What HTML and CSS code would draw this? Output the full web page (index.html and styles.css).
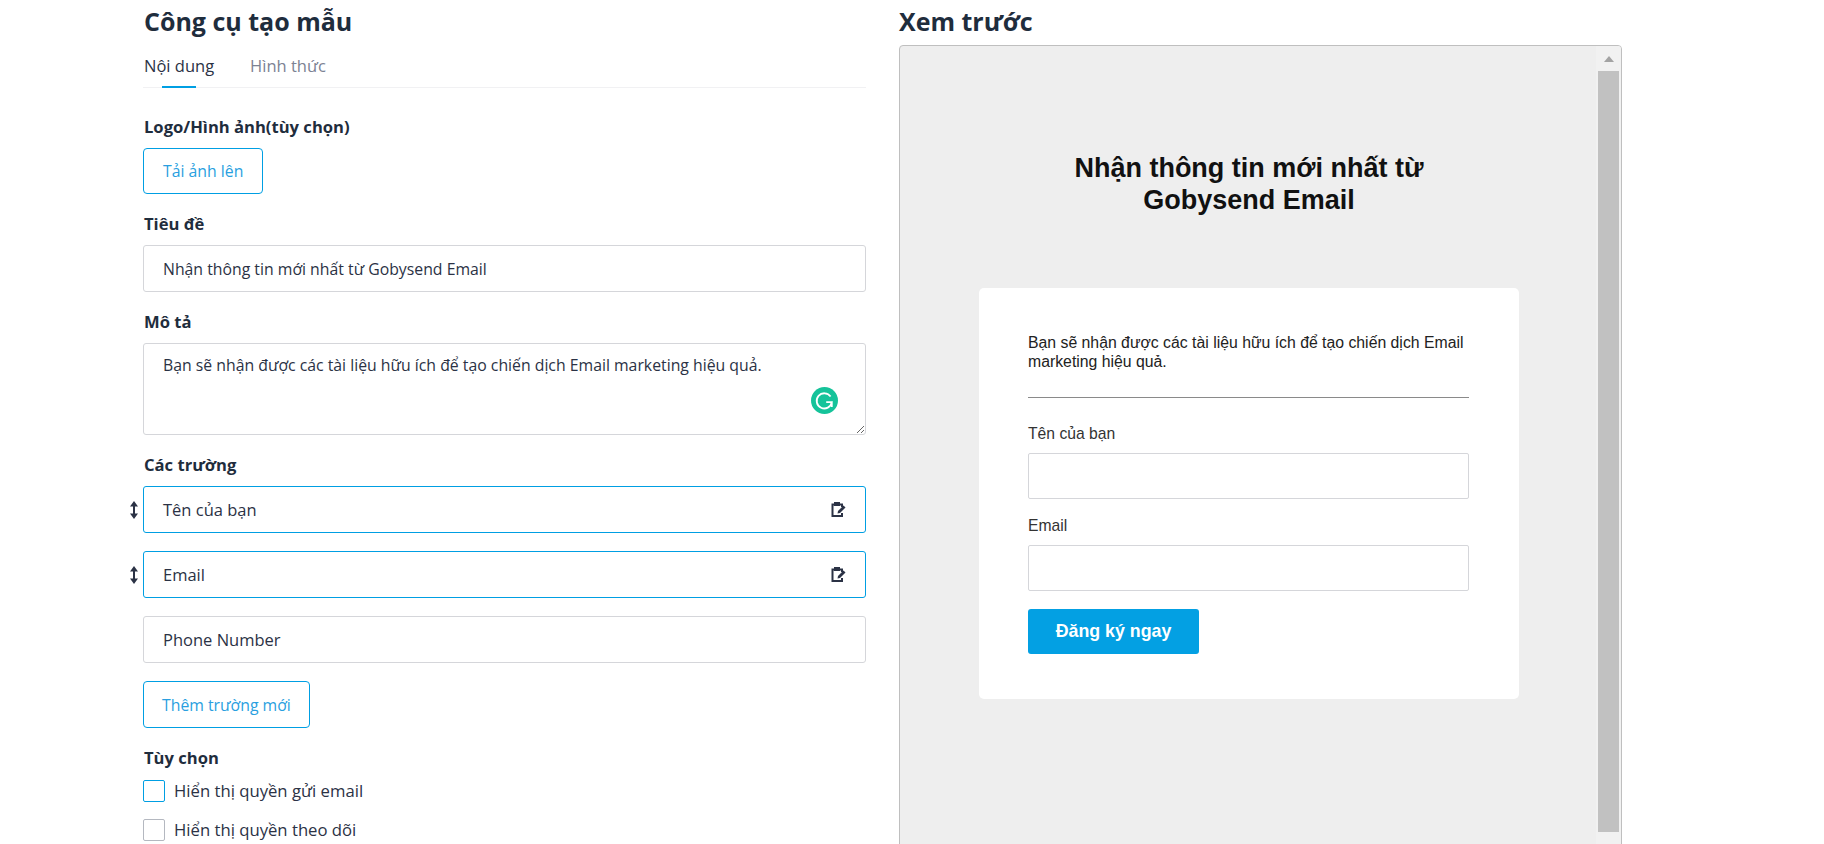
FILE: index.html
```html
<!DOCTYPE html>
<html lang="vi">
<head>
<meta charset="utf-8">
<title>Công cụ tạo mẫu</title>
<link rel="stylesheet" href="styles.css">
</head>
<body>
<div class="page">
  <section class="builder">
    <h2 class="title">Công cụ tạo mẫu</h2>
    <nav class="tabs">
      <a class="tab tab-active">Nội dung</a>
      <a class="tab tab-muted">Hình thức</a>
    </nav>
    <div class="label label-first">Logo/Hình ảnh(tùy chọn)</div>
    <button class="btn-outline">Tải ảnh lên</button>
    <div class="label">Tiêu đề</div>
    <input class="field" type="text" value="Nhận thông tin mới nhất từ Gobysend Email">
    <div class="label">Mô tả</div>
    <div class="area-wrap">
      <textarea class="area">Bạn sẽ nhận được các tài liệu hữu ích để tạo chiến dịch Email marketing hiệu quả.</textarea>
      <svg class="grammarly" width="27" height="27" viewBox="0 0 27 27">
        <circle cx="13.5" cy="13.5" r="13.5" fill="#15c39a"/>
        <path d="M19.6 9.600A7.600 7.600 0 1 0 20.800 15.200H15.200M20.800 15.200V20" fill="none" stroke="#fff" stroke-width="1.800"/>
      </svg>
    </div>
    <div class="label">Các trường</div>
    <div class="rows">
      <div class="row row-active">
        <svg class="drag" width="8" height="18" viewBox="0 0 8 18"><path d="M4 0 8 5.500H5v7h3L4 18 0 12.500h3v-7H0z" fill="#2b3245"/></svg>
        <span>Tên của bạn</span>
        <svg class="edit" width="15" height="15" viewBox="0 0 15 15"><path d="M8.500 2.500H11V5M11 11v3H1.500V2.500H4" fill="none" stroke="#2b3245" stroke-width="2"/><rect x="3" y="0" width="6" height="4" fill="#2b3245"/><path d="M6.500 11.500 7 9 12.500 3.500 14.500 5.500 9 11z" fill="#2b3245"/></svg>
      </div>
      <div class="row row-active">
        <svg class="drag" width="8" height="18" viewBox="0 0 8 18"><path d="M4 0 8 5.500H5v7h3L4 18 0 12.500h3v-7H0z" fill="#2b3245"/></svg>
        <span>Email</span>
        <svg class="edit" width="15" height="15" viewBox="0 0 15 15"><path d="M8.500 2.500H11V5M11 11v3H1.500V2.500H4" fill="none" stroke="#2b3245" stroke-width="2"/><rect x="3" y="0" width="6" height="4" fill="#2b3245"/><path d="M6.500 11.500 7 9 12.500 3.500 14.500 5.500 9 11z" fill="#2b3245"/></svg>
      </div>
      <div class="row"><span>Phone Number</span></div>
    </div>
    <button class="btn-outline btn-add">Thêm trường mới</button>
    <div class="label label-opts">Tùy chọn</div>
    <label class="check"><span class="box box-focus"></span>Hiển thị quyền gửi email</label>
    <label class="check check-two"><span class="box"></span>Hiển thị quyền theo dõi</label>
  </section>

  <section class="preview">
    <h2 class="title">Xem trước</h2>
    <div class="frame">
      <div class="canvas">
        <h1 class="pv-title">Nhận thông tin mới nhất từ Gobysend Email</h1>
        <div class="card">
          <p class="pv-desc">Bạn sẽ nhận được các tài liệu hữu ích để tạo chiến dịch Email marketing hiệu quả.</p>
          <hr class="pv-line">
          <div class="pv-label">Tên của bạn</div>
          <div class="pv-input"></div>
          <div class="pv-label pv-label-two">Email</div>
          <div class="pv-input"></div>
          <button class="pv-btn">Đăng ký ngay</button>
        </div>
      </div>
      <div class="scrollbar">
        <div class="arrow"></div>
        <div class="thumb"></div>
      </div>
    </div>
  </section>
</div>
</body>
</html>
```
FILE: styles.css
```css
* { box-sizing: border-box; }
html, body { margin: 0; height: 844px; overflow: hidden; background: #fff; }
body { font-family: "Open Sans", "Noto Sans", sans-serif; color: #2b3245; }
.page { display: flex; gap: 33px; padding-left: 143px; }
.builder, .preview { width: 723px; flex: none; }
.title { margin: 0; height: 45px; padding-top: 4px; padding-left: 1px; font-size: 25px; line-height: 34px; font-weight: 700; color: #1f2d3d; }
.preview .title { padding-left: 0; }
.tabs { display: flex; gap: 36px; height: 43px; padding-left: 1px; border-bottom: 1px solid #f1f1f3; }
.tab { position: relative; font-size: 16.500px; line-height: 22px; padding-top: 10px; }
.tab-active::after { content: ""; position: absolute; left: 18px; width: 34px; bottom: -1px; height: 2px; background: #009fe3; }
.tab-muted { color: #7c8293; }
.label { font-size: 16.600px; line-height: 22px; font-weight: 700; color: #1f2d3d; margin: 19px 0 10px 1px; }
.label-first { margin-top: 28px; }
.label-opts { margin-bottom: 11px; }
.btn-outline { display: block; height: 46px; padding: 0 19px; font: 400 15.800px "Open Sans", sans-serif; color: #2a9fe0; background: #fff; border: 1px solid #009fe3; border-radius: 4px; }
.field, .area, .row { width: 723px; border: 1px solid #d5d6da; border-radius: 3px; background: #fff; color: #2b3245; font: 400 15.800px "Open Sans", sans-serif; }
.field { display: block; height: 47px; padding: 0 19px; outline: none; }
.area-wrap { position: relative; height: 92px; }
.area { display: block; height: 92px; padding: 10px 19px; line-height: 22px; outline: none; resize: vertical; }
.grammarly { position: absolute; right: 28px; top: 44px; }
.rows { display: flex; flex-direction: column; gap: 18px; }
.row { position: relative; height: 47px; display: flex; align-items: center; justify-content: space-between; padding: 0 19px; font-size: 16.500px; }
.row-active { border-color: #009fe3; }
.drag { position: absolute; left: -14px; top: 14px; }
.edit { flex: none; }
.btn-add { margin-top: 18px; height: 47px; padding: 0 18px; }
.check { display: flex; align-items: center; gap: 9px; height: 22px; font-size: 16.700px; line-height: 22px; }
.check-two { margin-top: 17px; }
.box { width: 22px; height: 22px; border: 1px solid #b4b8c0; border-radius: 2px; background: #fff; }
.box-focus { border-color: #009fe3; }
.frame { display: flex; height: 900px; border: 1px solid #bfbfbf; border-radius: 4px; background: #eee; overflow: hidden; }
.canvas { flex: 1; min-width: 0; padding-top: 106px; padding-left: 79px; font-family: "Liberation Sans", Arial, sans-serif; }
.pv-title { margin: 0 0 0 70px; width: 400px; text-align: center; font-size: 27px; line-height: 32px; font-weight: 700; color: #111; }
.card { width: 540px; height: 411px; margin-top: 72px; padding: 45px 50px 45px 49px; background: #fff; border-radius: 5px; }
.pv-desc { margin: 0; font-size: 15.800px; line-height: 19px; color: #222; }
.pv-line { margin: 26px 0 0; border: 0; border-top: 1px solid #8a8a8a; }
.pv-label { font-size: 15.700px; line-height: 18px; color: #333; margin: 27px 0 10px; }
.pv-label-two { margin: 18px 0 10px; }
.pv-input { height: 46px; border: 1px solid #d5d6da; border-radius: 2px; background: #fff; }
.pv-btn { display: block; margin-top: 18px; width: 171px; height: 45px; border: 0; border-radius: 3px; background: #03a0e3; color: #fff; font: 700 17.800px "Liberation Sans", Arial, sans-serif; }
.scrollbar { width: 25px; flex: none; background: #f1f1f1; padding: 0 2px; }
.arrow { width: 0; height: 0; margin: 10px auto 0; border-left: 5.500px solid transparent; border-right: 5.500px solid transparent; border-bottom: 6px solid #a3a3a3; }
.thumb { height: 761px; margin-top: 9px; background: #c1c1c1; }
```
